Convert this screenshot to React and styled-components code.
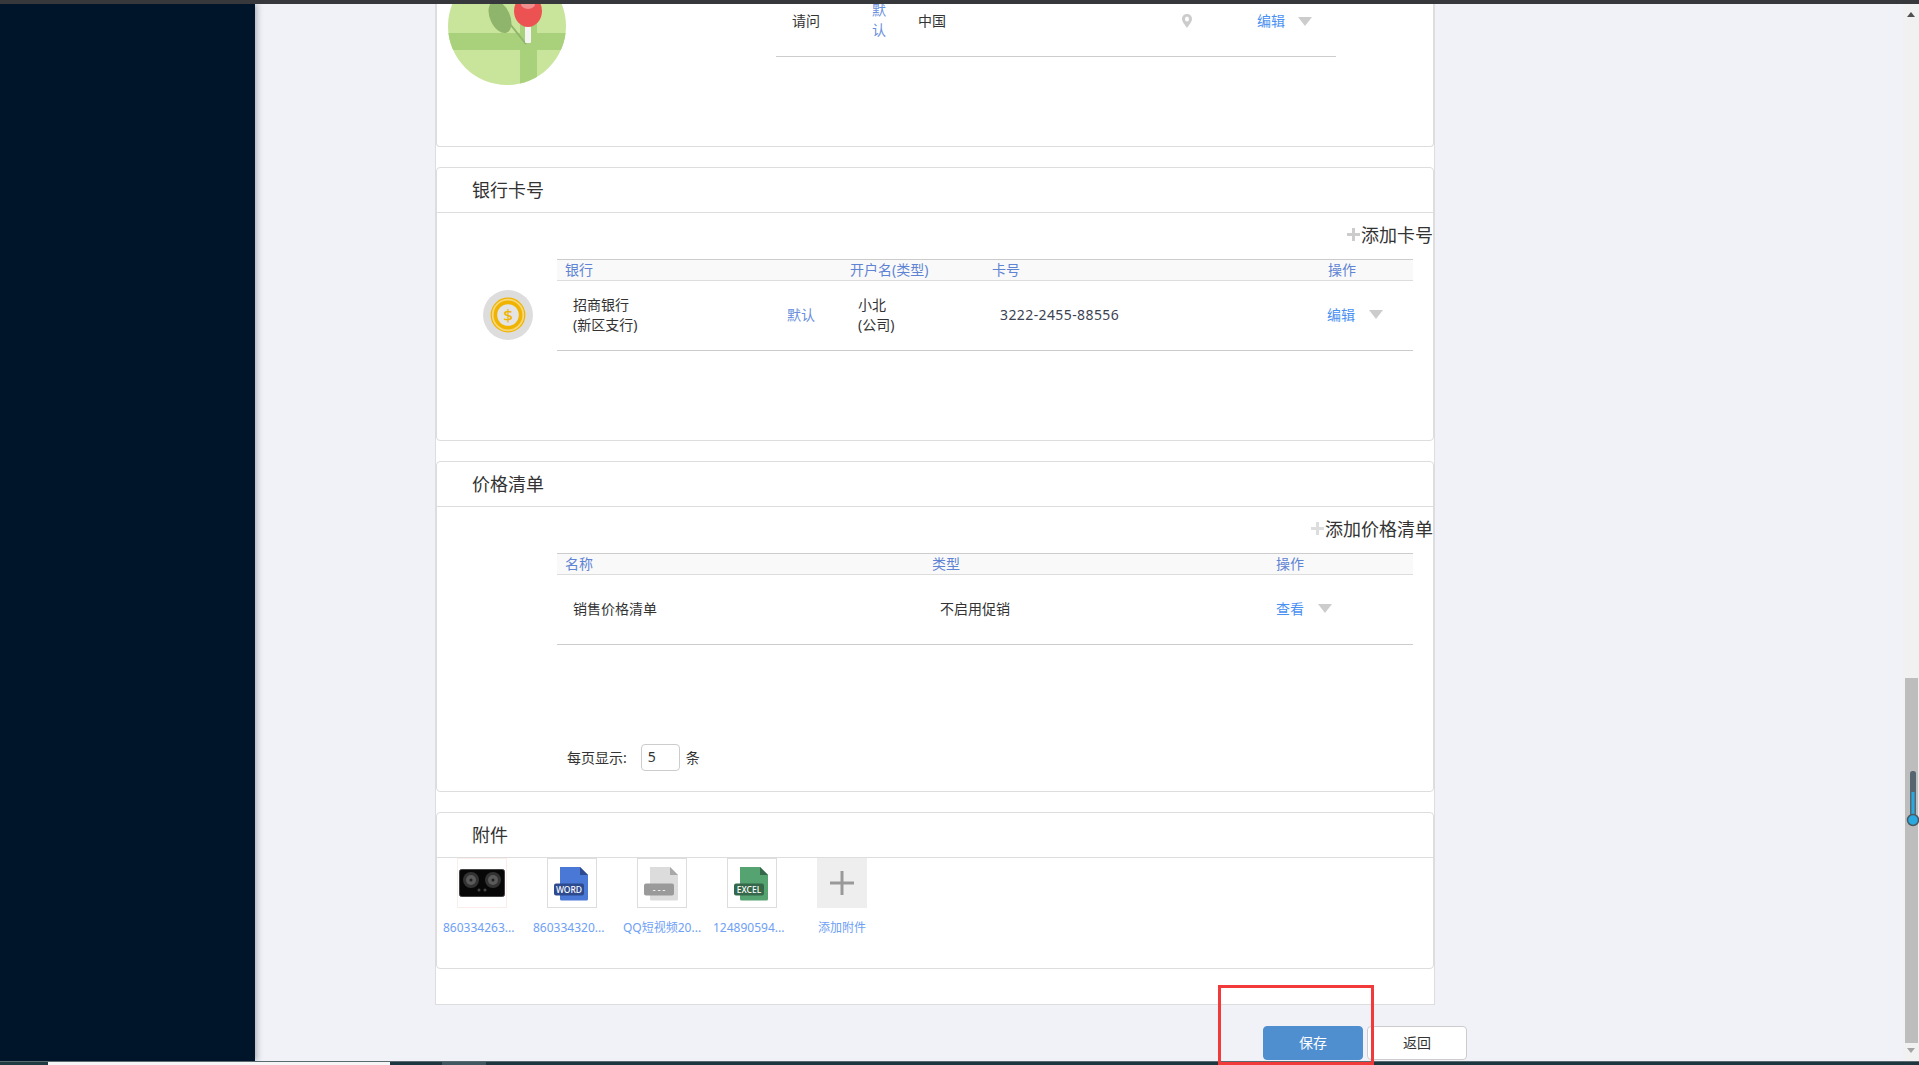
import React from 'react';
import styled, { createGlobalStyle } from 'styled-components';

const Global = createGlobalStyle`
    html, body {
        margin: 0;
        padding: 0;
        overflow: hidden;
    }
    * {
        box-sizing: border-box;
    }
    body {
        font-family: "Noto Sans", "Noto Sans CJK SC", sans-serif;
        font-size: 14px;
        color: #333;
    }
`;

const Page = styled.div`
    position: relative;
    width: 100vw;
    height: 100vh;
    overflow: hidden;
    display: flex;
    flex-direction: column;
    background: #f0f2f7;
`;
const TopStrip = styled.div`
    height: 4px;
    flex: none;
    background: #36383b;
    position: relative;
    z-index: 2;
`;
const Body = styled.div`
    flex: 1;
    min-height: 0;
    display: flex;
`;
const Sidebar = styled.div`
    width: 255px;
    flex: none;
    background: #00152a;
    box-shadow: 2px 0 6px rgba(0, 21, 41, 0.3);
`;
const Main = styled.div`
    flex: 1;
    min-width: 0;
    padding-left: 180px;
`;
const Panel = styled.div`
    width: 1000px;
    height: 1001px;
    background: #fff;
    border: 1px solid #ddd;
    border-top: none;
    display: flex;
    flex-direction: column;
    gap: 20px;
`;
const Card = styled.div`
    height: ${p => p.$h}px;
    flex: none;
    border: 1px solid #ddd;
    border-radius: 4px;
    ${p => p.$cut && 'border-top: none; border-top-left-radius: 0; border-top-right-radius: 0;'}
`;
const CardHead = styled.div`
    height: 45px;
    padding: 0 0 2px 35px;
    display: flex;
    align-items: center;
    border-bottom: 1px solid #ddd;
    font-size: 18px;
    color: #333;
`;
const AddBar = styled.div`
    height: 46px;
    padding-bottom: 4px;
    display: flex;
    align-items: center;
    justify-content: flex-end;
    font-size: 18px;
    color: #333;
    gap: 1px;
`;
const TableWrap = styled.div`
    display: flex;
    padding-left: ${p => (p.$icon ? 0 : 120)}px;
    padding-right: 20px;
`;
const CoinCell = styled.div`
    width: 120px;
    flex: none;
    padding: 31px 0 0 46px;
`;
const Table = styled.div`
    flex: 1;
    min-width: 0;
`;
const HeadRow = styled.div`
    height: 22px;
    display: grid;
    grid-template-columns: ${p => p.$cols};
    align-items: center;
    padding-left: 8px;
    background: #f9f9f9;
    border-top: 1px solid #ccc;
    border-bottom: 1px solid #ddd;
    color: #5f84d3;
    font-size: 14px;
    line-height: 20px;
`;
const Row = styled.div`
    height: 70px;
    display: grid;
    grid-template-columns: ${p => p.$cols};
    align-items: center;
    padding: 0 0 2px 16px;
    border-bottom: 1px solid #ccc;
    line-height: 20px;
    font-size: 14px;
    color: #333;
`;
const CardNumber = styled.span`
    letter-spacing: 0.4px;
    color: #3c4252;
`;
const Default = styled.span`
    color: #6a8fdc;
`;
const VerticalDefault = styled(Default)`
    width: 14px;
    margin-top: -11px;
`;
const Ops = styled.div`
    display: flex;
    align-items: center;
    color: #4a90f2;
`;
const Caret = styled.span`
    width: 0;
    height: 0;
    margin-left: ${p => p.$gap}px;
    border-left: 7.5px solid transparent;
    border-right: 7.5px solid transparent;
    border-top: 9px solid #ccc;
`;
const TopWrap = styled.div`
    display: flex;
    padding-left: 11px;
`;
const MapBox = styled.div`
    width: 118px;
    height: 81px;
    flex: none;
`;
const TopRow = styled(Row)`
    width: 560px;
    height: 53px;
    margin-left: 210px;
    align-items: start;
    padding: 7px 0 0 16px;
`;
const PinCell = styled.div`
    padding-top: 2px;
    height: 20px;
`;
const Pager = styled.div`
    display: flex;
    align-items: center;
    margin: 99px 0 0 130px;
    height: 27px;
`;
const PagerText = styled.span`
    margin-top: -2px;
`;
const PagerInput = styled.div`
    width: 39px;
    height: 27px;
    margin: 0 6px 0 14px;
    padding: 0 0 2px 6px;
    border: 1px solid #ccc;
    border-radius: 4px;
    display: flex;
    align-items: center;
    background: #fff;
`;
const Files = styled.div`
    display: flex;
`;
const FileItem = styled.div`
    width: 90px;
    flex: none;
`;
const Tile = styled.div`
    width: 50px;
    height: 50px;
    margin-left: 20px;
    border: 1px solid ${p => p.$border};
    background: ${p => p.$bg || '#fff'};
    display: flex;
    align-items: center;
    justify-content: center;
`;
const FileName = styled.div`
    margin: 10px 0 0 ${p => p.$left}px;
    font-size: 12px;
    line-height: 20px;
    color: #6ea0f5;
    white-space: nowrap;
`;
const Actions = styled.div`
    width: 1032px;
    margin-top: 21px;
    display: flex;
    justify-content: flex-end;
    gap: 4px;
`;
const Button = styled.button`
    width: 100px;
    height: 34px;
    padding: 0 0 2px;
    border-radius: 4px;
    font: inherit;
    font-size: 14px;
    border: 1px solid ${p => (p.$primary ? '#4f8ecf' : '#ccc')};
    background: ${p => (p.$primary ? '#4f8ecf' : '#fff')};
    color: ${p => (p.$primary ? '#fff' : '#333')};
`;
const Gutter = styled.div`
    width: 16px;
    flex: none;
    background: #f1f1f1;
    display: flex;
    flex-direction: column;
    align-items: center;
    position: relative;
`;
const Arrow = styled.span`
    width: 0;
    height: 0;
    margin-top: ${p => p.$mt}px;
    border-left: 4px solid transparent;
    border-right: 4px solid transparent;
    ${p => (p.$up ? 'border-bottom: 5px solid #505050;' : 'border-top: 5px solid #a3a3a3;')}
`;
const Thumb = styled.div`
    width: 13px;
    height: 365px;
    margin: 661px 0 0 1px;
    background: #bdbdbd;
`;
const Thermo = styled.svg`
    position: absolute;
    left: 3px;
    top: 766px;
`;
const BottomStrip = styled.div`
    height: 4px;
    flex: none;
    display: flex;
    background: #1c3640;
    border-top: 1px solid #5a6a70;
`;
const TaskSlot = styled.div`
    width: ${p => p.$w}px;
    margin-left: ${p => p.$ml || 0}px;
    background: ${p => p.$bg};
`;
const Highlight = styled.div`
    position: absolute;
    left: 1218px;
    top: 985px;
    width: 156px;
    height: 80px;
    border: 3px solid #f33a3a;
    z-index: 3;
`;

const MapIcon = () => (
    <svg width="118" height="81" viewBox="0 0 118 81">
        <defs>
            <clipPath id="mapClip">
                <circle cx="59" cy="22" r="59" />
            </clipPath>
        </defs>
        <g clipPath="url(#mapClip)">
            <rect x="0" y="-40" width="118" height="130" fill="#c8e59b" />
            <rect x="0" y="29" width="118" height="17" fill="#a9d07a" />
            <rect x="72" y="0" width="17" height="81" fill="#a9d07a" />
        </g>
        <path d="M62 20 L78 40" stroke="#8fb56c" strokeWidth="2" />
        <ellipse cx="52" cy="13" rx="10" ry="17" transform="rotate(-24 52 13)" fill="#8fb56c" />
        <rect x="77" y="22" width="6" height="17" rx="1" fill="#f4f4f4" />
        <ellipse cx="80" cy="7" rx="14" ry="16" fill="#ec5252" />
        <ellipse cx="80" cy="0" rx="7" ry="5" fill="#f08f8f" />
    </svg>
);

const PinIcon = () => (
    <svg width="12" height="14" viewBox="0 0 12 14">
        <path d="M6 0 C9.2 0 11 2.2 11 5 C11 8 7.5 11.5 6 14 C4.5 11.5 1 8 1 5 C1 2.2 2.8 0 6 0 Z" fill="#cccccc" />
        <ellipse cx="6" cy="5" rx="2" ry="2.6" fill="#fff" />
    </svg>
);

const PlusIcon = ({ size, thick, color }) => (
    <svg width={size} height={size} viewBox={`0 0 ${size} ${size}`}>
        <rect x="0" y={(size - thick) / 2} width={size} height={thick} fill={color} />
        <rect x={(size - thick) / 2} y="0" width={thick} height={size} fill={color} />
    </svg>
);

const CoinIcon = () => (
    <svg width="50" height="50" viewBox="0 0 50 50">
        <circle cx="25" cy="25" r="25" fill="#dddddd" />
        <circle cx="25" cy="25" r="16.8" fill="#f7d77a" stroke="#f0b400" strokeWidth="1.2" />
        <circle cx="25" cy="25" r="12.6" fill="#e4e4e4" stroke="#f0b400" strokeWidth="3.6" />
        <text x="25" y="31" textAnchor="middle" fontSize="17" fontWeight="500" fill="#f0b400">$</text>
    </svg>
);

const StoveIcon = () => (
    <svg width="46" height="28" viewBox="0 0 46 28">
        <rect x="0.5" y="0.5" width="45" height="27" rx="2" fill="#070707" stroke="#444" />
        <circle cx="12" cy="11" r="8" fill="#333" />
        <circle cx="12" cy="11" r="5" fill="#5a5a5a" />
        <circle cx="12" cy="11" r="1.5" fill="#222" />
        <circle cx="34" cy="11" r="8" fill="#333" />
        <circle cx="34" cy="11" r="5" fill="#5a5a5a" />
        <circle cx="34" cy="11" r="1.5" fill="#222" />
        <circle cx="20" cy="21" r="1.5" fill="#444" />
        <circle cx="26" cy="21" r="1.5" fill="#444" />
    </svg>
);

const DocIcon = ({ body, fold, band, label }) => (
    <svg width="48" height="48" viewBox="0 0 48 48">
        <path d="M12 8 H32 L40 16 V40 a1.5 1.5 0 0 1 -1.5 1.5 H13.5 a1.5 1.5 0 0 1 -1.5 -1.5 Z" fill={body} />
        <path d="M32 8 L40 16 H32 Z" fill={fold} />
        <rect x="6" y="24.5" width="30" height="12" rx="2" fill={band} />
        <text x="21" y="34" textAnchor="middle" fontSize="8.5" fontWeight="500" fontFamily="Noto Sans" fill="#fff">{label}</text>
    </svg>
);

const files = [
    { name: '860334263...', left: 6, border: '#fbeeea', icon: <StoveIcon /> },
    { name: '860334320...', left: 6, border: '#ddd', icon: <DocIcon body="#4a78d6" fold="#2d4a8f" band="#2d4a8f" label="WORD" /> },
    { name: 'QQ短视频20...', left: 6, border: '#ddd', icon: <DocIcon body="#dcdcdc" fold="#a8a8a8" band="#9a9a9a" label="- - -" /> },
    { name: '124890594...', left: 6, border: '#ddd', icon: <DocIcon body="#55a371" fold="#35684a" band="#35684a" label="EXCEL" /> },
    { name: '添加附件', left: 21, border: '#eee', bg: '#eee', icon: <PlusIcon size={24} thick={3} color="#999" /> },
];

export default function App() {
    return (
        <Page>
            <Global />
            <TopStrip />
            <Body>
                <Sidebar />
                <Main>
                    <Panel>
                        <Card $h={143} $cut>
                            <TopWrap>
                                <MapBox><MapIcon /></MapBox>
                                <TopRow $cols="80px 46px 263px 76px 1fr">
                                    <span>请问</span>
                                    <VerticalDefault>默认</VerticalDefault>
                                    <span>中国</span>
                                    <PinCell><PinIcon /></PinCell>
                                    <Ops>编辑<Caret $gap={13} /></Ops>
                                </TopRow>
                            </TopWrap>
                        </Card>
                        <Card $h={274}>
                            <CardHead>银行卡号</CardHead>
                            <AddBar><PlusIcon size={13} thick={3} color="#ccc" />添加卡号</AddBar>
                            <TableWrap $icon>
                                <CoinCell><CoinIcon /></CoinCell>
                                <Table>
                                    <HeadRow $cols="285px 142px 336px 1fr">
                                        <span>银行</span>
                                        <span>开户名(类型)</span>
                                        <span>卡号</span>
                                        <span>操作</span>
                                    </HeadRow>
                                    <Row $cols="214px 71px 142px 327px 1fr">
                                        <span>招商银行<br />(新区支行)</span>
                                        <Default>默认</Default>
                                        <span>小北<br />(公司)</span>
                                        <CardNumber>3222-2455-88556</CardNumber>
                                        <Ops>编辑<Caret $gap={14} /></Ops>
                                    </Row>
                                </Table>
                            </TableWrap>
                        </Card>
                        <Card $h={331}>
                            <CardHead>价格清单</CardHead>
                            <AddBar><PlusIcon size={13} thick={3} color="#ddd" />添加价格清单</AddBar>
                            <TableWrap>
                                <Table>
                                    <HeadRow $cols="367px 344px 1fr">
                                        <span>名称</span>
                                        <span>类型</span>
                                        <span>操作</span>
                                    </HeadRow>
                                    <Row $cols="367px 336px 1fr">
                                        <span>销售价格清单</span>
                                        <span>不启用促销</span>
                                        <Ops>查看<Caret $gap={14} /></Ops>
                                    </Row>
                                </Table>
                            </TableWrap>
                            <Pager>
                                <PagerText>每页显示:</PagerText>
                                <PagerInput>5</PagerInput>
                                <PagerText>条</PagerText>
                            </Pager>
                        </Card>
                        <Card $h={157}>
                            <CardHead>附件</CardHead>
                            <Files>
                                {files.map(f => (
                                    <FileItem key={f.name}>
                                        <Tile $border={f.border} $bg={f.bg}>{f.icon}</Tile>
                                        <FileName $left={f.left}>{f.name}</FileName>
                                    </FileItem>
                                ))}
                            </Files>
                        </Card>
                    </Panel>
                    <Actions>
                        <Button $primary>保存</Button>
                        <Button>返回</Button>
                    </Actions>
                </Main>
                <Gutter>
                    <Arrow $up $mt={8} />
                    <Thumb />
                    <Arrow $mt={5} />
                    <Thermo width="14" height="60" viewBox="0 0 14 60">
                        <rect x="4" y="1" width="6" height="50" rx="2.5" fill="#566670" />
                        <rect x="5.5" y="22" width="3" height="28" fill="#29a9e0" />
                        <circle cx="7" cy="50" r="5.5" fill="#29a9e0" stroke="#4a5a64" strokeWidth="1.5" />
                    </Thermo>
                </Gutter>
            </Body>
            <BottomStrip>
                <TaskSlot $w={48} $bg="#1f3a42" />
                <TaskSlot $w={342} $bg="#f5f5f5" />
                <TaskSlot $w={44} $ml={52} $bg="#41575f" />
            </BottomStrip>
            <Highlight />
        </Page>
    );
}
